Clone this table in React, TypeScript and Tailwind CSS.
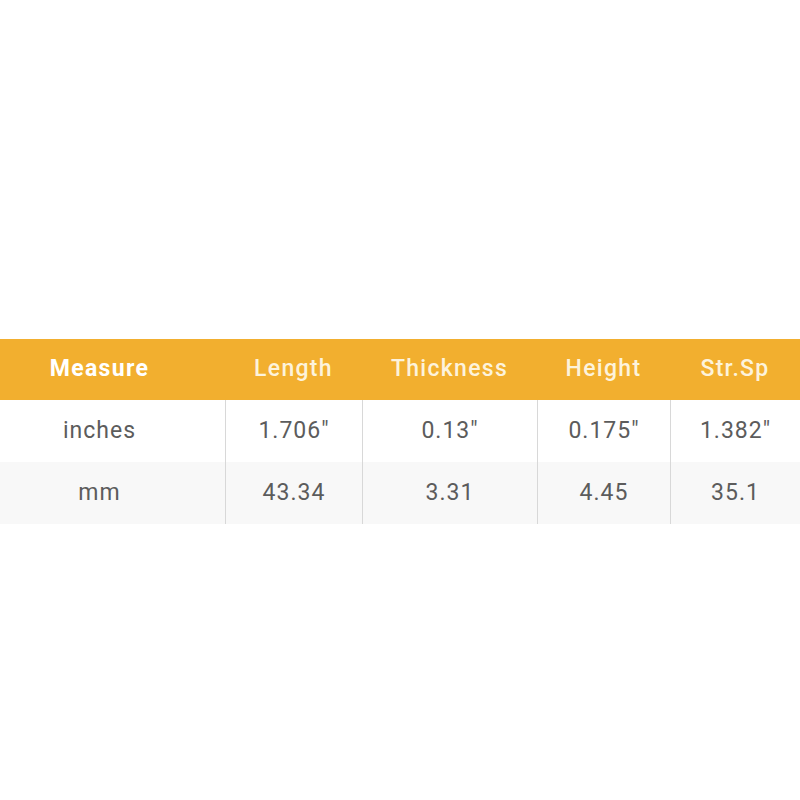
const headers = ['Length', 'Thickness', 'Height', 'Str.Sp']
const widths = ['w-[137px]', 'w-[175px]', 'w-[133px]', 'w-[130px]']

const rows = [
  { unit: 'inches', values: ['1.706″', '0.13″', '0.175″', '1.382″'], bg: 'bg-white' },
  { unit: 'mm', values: ['43.34', '3.31', '4.45', '35.1'], bg: 'bg-[#f8f8f8]' },
]

export default function App() {
  return (
    <div className="w-[800px] h-[800px] bg-white overflow-hidden font-['Roboto',sans-serif] pt-[339px]">
      <div className="flex h-[61px] bg-[#f2af2f] items-center text-[23px] tracking-[1.3px]">
        <div className="w-[226px] pr-[26px] text-center font-bold text-white">Measure</div>
        {headers.map((h, i) => (
          <div key={h} className={`${widths[i]} shrink-0 text-center font-medium text-[#fdf3dc]`}>
            {h}
          </div>
        ))}
      </div>
      {rows.map(row => (
        <div key={row.unit} className={`flex h-[62px] ${row.bg} text-[23px] text-[#5c5c5c] tracking-[1px]`}>
          <div className="w-[226px] pr-[26px] flex items-center justify-center">{row.unit}</div>
          {row.values.map((v, i) => (
            <div
              key={i}
              className={`${widths[i]} shrink-0 border-l border-[#d8d8d8] flex items-center justify-center`}
            >
              {v}
            </div>
          ))}
        </div>
      ))}
    </div>
  )
}
